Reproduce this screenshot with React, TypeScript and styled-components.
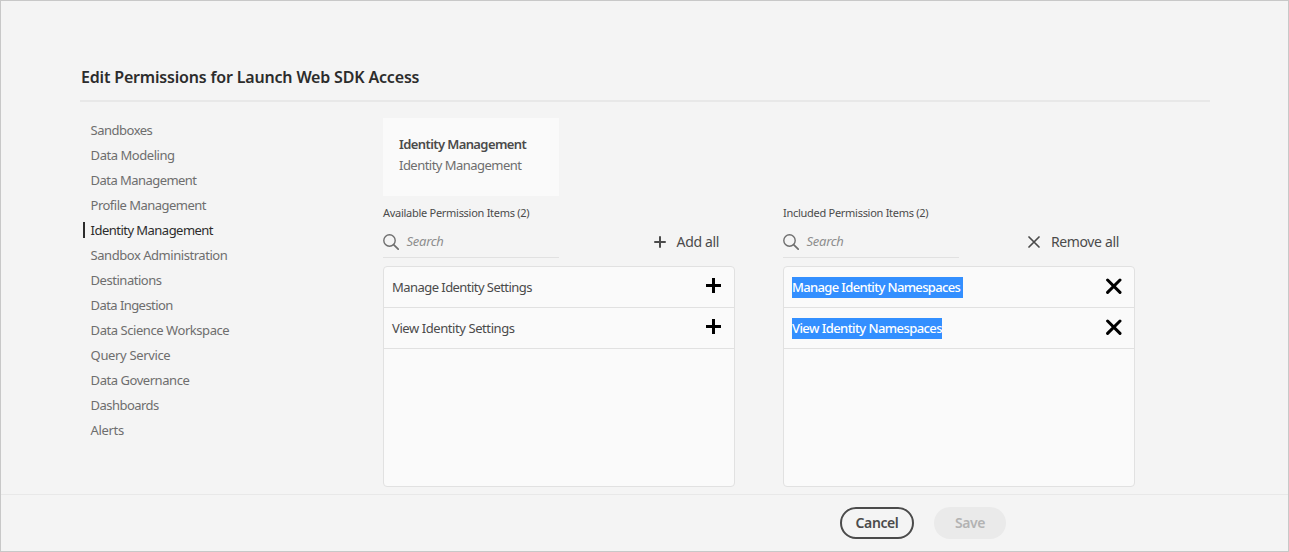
import React from "react";
import styled, { createGlobalStyle } from "styled-components";

const GlobalStyle = createGlobalStyle`
  * { box-sizing: border-box; }
  body { margin: 0; background: #f4f4f4; }
`;

const Frame = styled.div`
  width: 1289px;
  height: 552px;
  display: flex;
  flex-direction: column;
  border: 1px solid #c8c8c8;
  background: #f4f4f4;
  color: #4b4b4b;
  font-family: "Noto Sans", "Open Sans", sans-serif;
  font-size: 13px;
  line-height: 20px;
  white-space: nowrap;
  overflow: hidden;
`;

const Content = styled.main`
  height: 493px;
  padding: 64px 78px 0 79px;
`;

const Title = styled.h1`
  margin: 0;
  height: 37px;
  padding: 0 0 0 1px;
  border-bottom: 2px solid #e8e8e8;
  font-size: 16px;
  font-weight: 600;
  line-height: 24px;
  letter-spacing: -0.18px;
  color: #2c2c2c;
`;

const Body = styled.div`
  display: flex;
  padding-top: 16px;
`;

const Nav = styled.nav`
  width: 300px;
  margin-left: 3px;
  display: flex;
  flex-direction: column;
  gap: 5px;
  padding-top: 2px;
`;

const NavItem = styled.a<{ $active?: boolean; $tracking: number }>`
  height: 20px;
  display: flex;
  align-items: center;
  gap: 5.6px;
  letter-spacing: ${(p) => p.$tracking}px;
  color: ${(p) => (p.$active ? "#2c2c2c" : "#6e6e6e")};

  &::before {
    content: "";
    width: 2px;
    height: 16px;
    background: ${(p) => (p.$active ? "#2c2c2c" : "transparent")};
  }
`;

const Main = styled.section`
  display: flex;
  flex-direction: column;
`;

const Card = styled.div`
  width: 176px;
  height: 78px;
  padding: 16px;
  background: #fafafa;
  line-height: 21px;
  letter-spacing: -0.53px;
  color: #6e6e6e;
`;

const CardTitle = styled.div`
  font-weight: 600;
  letter-spacing: -0.6px;
  color: #4b4b4b;
`;

const Columns = styled.div`
  display: flex;
  gap: 48px;
  padding-top: 8px;
`;

const Column = styled.div`
  width: 352px;
`;

const ColumnLabel = styled.div`
  height: 18px;
  font-size: 11px;
  line-height: 18px;
  letter-spacing: -0.28px;
`;

const Toolbar = styled.div`
  display: flex;
  justify-content: space-between;
  height: 36px;
`;

const SearchField = styled.div`
  width: 176px;
  height: 36px;
  display: flex;
  align-items: center;
  gap: 7.6px;
  border-bottom: 1px solid #e1e1e1;
  padding-top: 4px;
  font-style: italic;
  letter-spacing: -0.3px;
  color: #8e8e8e;
`;

const SearchText = styled.span`
  padding-bottom: 2px;
`;

const BulkAction = styled.button`
  border: 0;
  height: 32px;
  padding: 0 16px 0 0;
  margin-top: 4px;
  display: flex;
  align-items: center;
  gap: 11px;
  background: none;
  font: inherit;
  font-size: 14px;
  letter-spacing: -0.35px;
  color: #4b4b4b;
`;

const List = styled.ul`
  list-style: none;
  margin: 8px 0 0;
  padding: 0;
  height: 221px;
  border: 1px solid #e1e1e1;
  border-radius: 4px;
  background: #fafafa;
`;

const Row = styled.li<{ $tracking: number }>`
  height: 41px;
  display: flex;
  align-items: center;
  justify-content: space-between;
  padding: 0 12px 0 8px;
  border-bottom: 1px solid #e1e1e1;
  letter-spacing: ${(p) => p.$tracking}px;
`;

const Selected = styled.span<{ $trail?: boolean }>`
  height: 21px;
  line-height: 21px;
  padding-right: ${(p) => (p.$trail ? 3 : 0)}px;
  background: #338fff;
  color: #fff;
  font-weight: 500;
`;

const Footer = styled.footer`
  flex: 1;
  display: flex;
  gap: 20px;
  padding: 12px 0 0 839px;
  border-top: 1px solid #e8e8e8;
`;

const Button = styled.button<{ $quiet?: boolean }>`
  width: ${(p) => (p.$quiet ? 72 : 74)}px;
  height: 32px;
  padding: 0;
  border-radius: 16px;
  border: ${(p) => (p.$quiet ? "0" : "2px solid #4b4b4b")};
  background: ${(p) => (p.$quiet ? "#eaeaea" : "transparent")};
  color: ${(p) => (p.$quiet ? "#b3b3b3" : "#4b4b4b")};
  font: inherit;
  font-size: 14px;
  font-weight: 600;
  letter-spacing: -0.4px;
`;

const SearchIcon = () => (
  <svg width="16" height="16" viewBox="0 0 16 16" fill="none" stroke="#6e6e6e">
    <circle cx="6.5" cy="6.5" r="5.7" strokeWidth="1.4" />
    <path d="M10.6 10.6 15.2 15.2" strokeWidth="1.7" strokeLinecap="round" />
  </svg>
);

const SmallPlus = () => (
  <svg width="12" height="12" viewBox="0 0 12 12" stroke="#4b4b4b" strokeWidth="2" strokeLinecap="round">
    <path d="M6 1v10M1 6h10" />
  </svg>
);

const SmallCross = () => (
  <svg width="12" height="12" viewBox="0 0 12 12" stroke="#4b4b4b" strokeWidth="1.7" strokeLinecap="round">
    <path d="M1 1l10 10M11 1L1 11" />
  </svg>
);

const RowPlus = () => (
  <svg width="17" height="18" viewBox="0 0 17 18" stroke="#000" strokeWidth="3">
    <path d="M8.5 0v15M1 7.5h15" />
  </svg>
);

const RowCross = () => (
  <svg width="17" height="18" viewBox="0 0 17 18" stroke="#000" strokeWidth="3" strokeLinecap="round">
    <path d="M2.6 2l12.4 12.4M15 2L2.6 14.4" />
  </svg>
);

const sections: { name: string; tracking: number }[] = [
  { name: "Sandboxes", tracking: -0.5 },
  { name: "Data Modeling", tracking: -0.45 },
  { name: "Data Management", tracking: -0.55 },
  { name: "Profile Management", tracking: -0.52 },
  { name: "Identity Management", tracking: -0.53 },
  { name: "Sandbox Administration", tracking: -0.46 },
  { name: "Destinations", tracking: -0.47 },
  { name: "Data Ingestion", tracking: -0.57 },
  { name: "Data Science Workspace", tracking: -0.44 },
  { name: "Query Service", tracking: -0.35 },
  { name: "Data Governance", tracking: -0.45 },
  { name: "Dashboards", tracking: -0.55 },
  { name: "Alerts", tracking: -0.35 },
];

export default function App() {
  return (
    <>
      <GlobalStyle />
      <Frame>
        <Content>
          <Title>Edit Permissions for Launch Web SDK Access</Title>
          <Body>
            <Nav>
              {sections.map(({ name, tracking }) => (
                <NavItem key={name} $active={name === "Identity Management"} $tracking={tracking}>
                  <span>{name}</span>
                </NavItem>
              ))}
            </Nav>
            <Main>
              <Card>
                <CardTitle>Identity Management</CardTitle>
                <div>Identity Management</div>
              </Card>
              <Columns>
                <Column>
                  <ColumnLabel>Available Permission Items (2)</ColumnLabel>
                  <Toolbar>
                    <SearchField>
                      <SearchIcon />
                      <SearchText>Search</SearchText>
                    </SearchField>
                    <BulkAction>
                      <SmallPlus />
                      <span>Add all</span>
                    </BulkAction>
                  </Toolbar>
                  <List>
                    <Row $tracking={-0.55}>
                      <span>Manage Identity Settings</span>
                      <RowPlus />
                    </Row>
                    <Row $tracking={-0.42}>
                      <span>View Identity Settings</span>
                      <RowPlus />
                    </Row>
                  </List>
                </Column>
                <Column>
                  <ColumnLabel>Included Permission Items (2)</ColumnLabel>
                  <Toolbar>
                    <SearchField>
                      <SearchIcon />
                      <SearchText>Search</SearchText>
                    </SearchField>
                    <BulkAction>
                      <SmallCross />
                      <span>Remove all</span>
                    </BulkAction>
                  </Toolbar>
                  <List>
                    <Row $tracking={-0.65}>
                      <Selected $trail>Manage Identity Namespaces</Selected>
                      <RowCross />
                    </Row>
                    <Row $tracking={-0.58}>
                      <Selected>View Identity Namespaces</Selected>
                      <RowCross />
                    </Row>
                  </List>
                </Column>
              </Columns>
            </Main>
          </Body>
        </Content>
        <Footer>
          <Button>Cancel</Button>
          <Button $quiet>Save</Button>
        </Footer>
      </Frame>
    </>
  );
}
